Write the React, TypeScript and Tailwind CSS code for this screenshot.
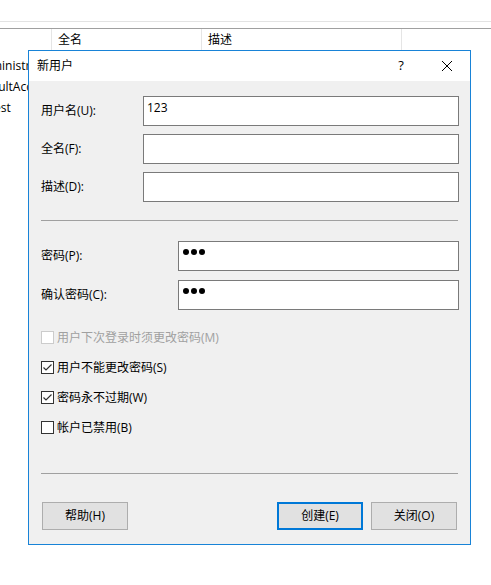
import React from "react";

const font = { fontFamily: '"Open Sans", "Noto Sans CJK SC", sans-serif' };

function TextBox({ value, wide = true, dots = false }: { value?: string; wide?: boolean; dots?: boolean }) {
  return (
    <div
      className={`h-[30px] border border-[#7a7a7a] bg-white px-[3px] pt-[3px] text-[12px] leading-[16px] text-black ${
        wide ? "w-[316px]" : "w-[281px]"
      }`}
    >
      {dots ? (
        <span className="flex gap-[2px] pl-[1px] pt-[4px]">
          <span className="h-[6px] w-[6px] rounded-full bg-black" />
          <span className="h-[6px] w-[6px] rounded-full bg-black" />
          <span className="h-[6px] w-[6px] rounded-full bg-black" />
        </span>
      ) : (
        value
      )}
    </div>
  );
}

function Field({ label, children }: { label: string; children: React.ReactNode }) {
  return (
    <div className="flex items-center justify-between">
      <span className="text-[12px] text-black">{label}</span>
      {children}
    </div>
  );
}

function Check({ label, checked = false, disabled = false }: { label: string; checked?: boolean; disabled?: boolean }) {
  return (
    <div className="flex h-[13px] items-center">
      <span
        className={`flex h-[13px] w-[13px] items-center justify-center border bg-white ${
          disabled ? "border-[#cccccc]" : "border-[#333333]"
        }`}
      >
        {checked && (
          <svg width="11" height="11" viewBox="0 0 11 11">
            <path d="M1.5 5.5 L4 8 L9.5 2.5" fill="none" stroke="#333" strokeWidth="1.2" />
          </svg>
        )}
      </span>
      <span className={`ml-[3px] text-[12px] ${disabled ? "text-[#a0a0a0]" : "text-black"}`}>{label}</span>
    </div>
  );
}

function Btn({ label, focused = false }: { label: string; focused?: boolean }) {
  return (
    <div
      className={`flex h-[28px] w-[86px] items-center justify-center bg-[#e1e1e1] text-[12px] text-black ${
        focused ? "border-2 border-[#0078d7]" : "border border-[#adadad]"
      }`}
    >
      {label}
    </div>
  );
}

export default function App() {
  return (
    <div className="relative h-[585px] w-[491px] overflow-hidden bg-white" style={font}>
      {/* list view behind the dialog */}
      <div className="h-[21px]" />
      <div className="h-px bg-[#e3e3e3]" />
      <div className="h-[6px]" />
      <div className="h-px bg-[#a0a0a0]" />
      <div className="flex h-[22px] text-[12px] text-black">
        <div className="w-[52px] border-r border-[#e5e5e5]" />
        <div className="flex w-[150px] items-center border-r border-[#e5e5e5] pl-[6px]">全名</div>
        <div className="flex w-[200px] items-center border-r border-[#e5e5e5] pl-[6px]">描述</div>
      </div>
      <div className="flex flex-col pt-[4px] text-[12px] text-black">
        <div className="ml-[-24px] flex h-[21px] items-center">Administrator</div>
        <div className="ml-[-28px] flex h-[21px] items-center">DefaultAccount</div>
        <div className="ml-[-22px] flex h-[21px] items-center">Guest</div>
      </div>

      {/* dialog */}
      <div className="absolute left-[28px] top-[50px] flex h-[495px] w-[443px] flex-col border border-[#1883d7] bg-[#f0f0f0]">
        <div className="flex h-[30px] items-center bg-white pl-[8px]">
          <span className="text-[12px] text-black">新用户</span>
          <div className="ml-auto flex h-full">
            <div className="flex w-[46px] items-center justify-center text-[13px] text-black">?</div>
            <div className="flex w-[46px] items-center justify-center">
              <svg width="10" height="10" viewBox="0 0 10 10">
                <path d="M0 0 L10 10 M10 0 L0 10" stroke="#000" strokeWidth="1" />
              </svg>
            </div>
          </div>
        </div>

        <div className="flex flex-1 flex-col pl-[12px] pr-[11px] pt-[15px]">
          <div className="flex flex-col gap-[8px]">
            <Field label="用户名(U):">
              <TextBox value="123" />
            </Field>
            <Field label="全名(F):">
              <TextBox />
            </Field>
            <Field label="描述(D):">
              <TextBox />
            </Field>
          </div>

          <div className="mr-px mt-[18px] h-px bg-[#a0a0a0]" />

          <div className="mt-[20px] flex flex-col gap-[9px]">
            <Field label="密码(P):">
              <TextBox wide={false} dots />
            </Field>
            <Field label="确认密码(C):">
              <TextBox wide={false} dots />
            </Field>
          </div>

          <div className="mt-[21px] flex flex-col gap-[17px]">
            <Check label="用户下次登录时须更改密码(M)" disabled />
            <Check label="用户不能更改密码(S)" checked />
            <Check label="密码永不过期(W)" checked />
            <Check label="帐户已禁用(B)" />
          </div>

          <div className="mr-px mt-[39px] h-px bg-[#a0a0a0]" />

          <div className="mt-[28px] flex pl-px pr-[2px]">
            <Btn label="帮助(H)" />
            <div className="ml-auto flex gap-[8px]">
              <Btn label="创建(E)" focused />
              <Btn label="关闭(O)" />
            </div>
          </div>
        </div>
      </div>
    </div>
  );
}
